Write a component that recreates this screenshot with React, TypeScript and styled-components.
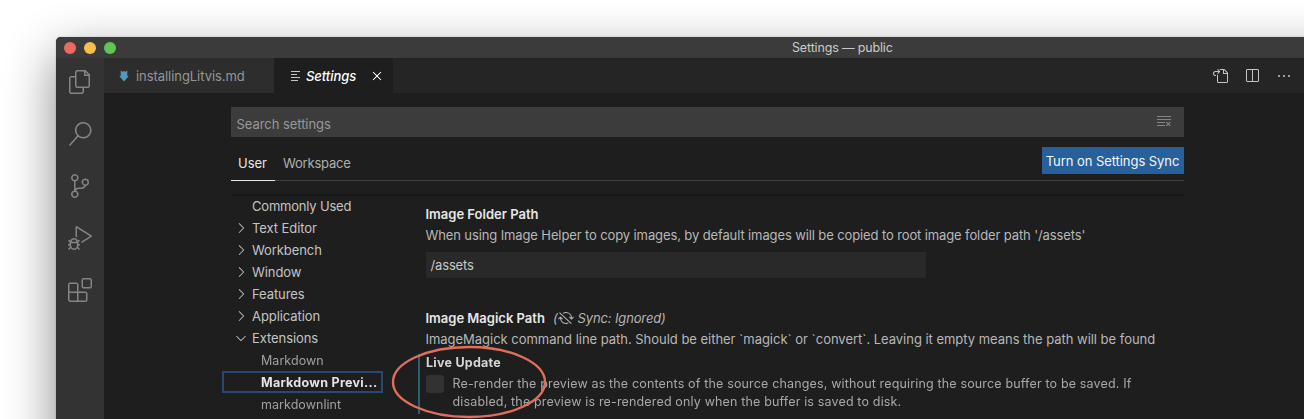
import React from "react";
import styled, { createGlobalStyle, css } from "styled-components";
import {
  VscFiles,
  VscSearch,
  VscSourceControl,
  VscDebugAlt,
  VscExtensions,
  VscGoToFile,
  VscSplitHorizontal,
  VscEllipsis,
  VscClearAll,
  VscSyncIgnored,
  VscChevronRight,
  VscChevronDown,
  VscClose,
} from "react-icons/vsc";

const GlobalStyle = createGlobalStyle`
  * { box-sizing: border-box; }
  html, body { margin: 0; background: #fff; overflow: hidden; }
  body { font-family: Inter, "Liberation Sans", sans-serif; font-size: 13px; color: #c4c4c4; }
  svg { display: block; flex: none; }
`;

const Page = styled.div`
  width: 1304px;
  height: 419px;
  padding: 37px 0 0 56px;
  overflow: hidden;
`;

const Window = styled.div`
  display: flex;
  flex-direction: column;
  width: 1400px;
  height: 700px;
  border-radius: 5px 0 0 0;
  background: #1e1e1e;
  box-shadow: 0 0 1px rgba(0, 0, 0, 0.5), 0 18px 50px rgba(0, 0, 0, 0.48);
`;

const TitleBar = styled.header`
  display: flex;
  align-items: center;
  height: 21px;
  padding-left: 8px;
  background: #3b3b3b;
  border-radius: 5px 0 0 0;
`;

const Light = styled.span<{ $color: string }>`
  width: 12px;
  height: 12px;
  margin-right: 8px;
  border-radius: 50%;
  background: ${(p) => p.$color};
`;

const Title = styled.span`
  margin: 0 0 1px 668px;
  letter-spacing: -0.15px;
  font-size: 12.5px;
  color: #cacaca;
`;

const Body = styled.div`
  display: flex;
  flex: 1;
`;

const ActivityBar = styled.nav`
  display: flex;
  flex-direction: column;
  align-items: center;
  gap: 28px;
  width: 48px;
  padding-top: 12px;
  background: #333333;
  color: #858585;
`;

const Editor = styled.main`
  display: flex;
  flex-direction: column;
  width: 1200px;
`;

const TabBar = styled.div`
  display: flex;
  height: 35px;
  background: #252526;
`;

const Tab = styled.div<{ $active?: boolean }>`
  display: flex;
  align-items: center;
  width: 170px;
  padding-left: 15px;
  background: #2d2d2d;
  color: #969696;
  ${(p) =>
    p.$active &&
    css`
      width: 119px;
      padding-left: 17px;
      background: #1e1e1e;
      color: #fff;
    `}
`;

const TabName = styled.span<{ $italic?: boolean }>`
  margin-left: ${(p) => (p.$italic ? 5 : 7)}px;
  padding-top: 1px;
  letter-spacing: -0.06px;
  font-style: ${(p) => (p.$italic ? "italic" : "normal")};
  font-weight: ${(p) => (p.$italic ? 500 : 400)};
  width: ${(p) => (p.$italic ? 63 : 120)}px;
  white-space: nowrap;
`;

const TabActions = styled.div`
  display: flex;
  align-items: center;
  gap: 16px;
  margin-left: 818.5px;
  color: #c5c5c5;
`;

const Settings = styled.section`
  width: 952.5px;
  margin: 14px 0 0 127px;
`;

const SearchBox = styled.div`
  display: flex;
  align-items: center;
  justify-content: space-between;
  height: 30px;
  padding: 3px 12px 0 5.5px;
  letter-spacing: -0.05px;
  background: #3c3c3c;
  color: #989898;
  svg { margin-bottom: 6px; color: #858585; }
`;

const ScopeRow = styled.div`
  display: flex;
  justify-content: space-between;
  height: 43.5px;
  border-bottom: 1px solid #404040;
`;

const Scopes = styled.div`
  display: flex;
`;

const Scope = styled.span<{ $active?: boolean }>`
  height: 43.5px;
  margin-right: 1px;
  padding: 0 7px;
  line-height: 53px;
  letter-spacing: ${(p) => (p.$active ? 0 : -0.2)}px;
  width: ${(p) => (p.$active ? "44px" : "auto")};
  color: ${(p) => (p.$active ? "#e7e7e7" : "#b0b0b0")};
  border-bottom: 1px solid ${(p) => (p.$active ? "#e7e7e7" : "transparent")};
`;

const SyncButton = styled.button`
  width: 142px;
  height: 27px;
  margin-top: 10px;
  padding: 0;
  border: 0;
  background: #28609c;
  color: #f2f6fa;
  font: inherit;
  letter-spacing: -0.06px;
`;

const Columns = styled.div`
  display: flex;
  height: 300px;
  margin-top: 13.5px;
  border-top: 2px solid #171717;
`;

const Toc = styled.ul`
  width: 195px;
  margin: -1px 0 0;
  padding: 0;
  list-style: none;
`;

const TocItem = styled.li<{ $spacing?: number }>`
  display: flex;
  align-items: center;
  gap: 3px;
  height: 22px;
  padding-left: 2px;
  letter-spacing: ${(p) => p.$spacing ?? -0.08}px;
`;

const ChevronSlot = styled.span`
  width: 16px;
`;

const TocChild = styled.li<{ $selected?: boolean }>`
  height: 22px;
  width: 161px;
  margin-left: -9px;
  padding-left: 37px;
  border: 2px solid transparent;
  line-height: 19px;
  font-size: 12.5px;
  letter-spacing: 0.05px;
  color: #a0a0a0;
  white-space: nowrap;
  > span { filter: blur(0.35px); }
  ${(p) =>
    p.$selected &&
    css`
      border-color: #264a72;
      font-weight: 700;
      letter-spacing: 0.29px;
      color: #e4e4e4;
    `}
`;

const SettingList = styled.div`
  width: 757px;
  padding-top: 7px;
  margin-left: -0.5px;
  white-space: nowrap;
`;

const SettingTitle = styled.div`
  display: flex;
  align-items: center;
  height: 21px;
  font-weight: 600;
  color: #e7e7e7;
`;

const SyncNote = styled.span`
  display: flex;
  align-items: center;
  margin-left: 8px;
  font-style: italic;
  font-weight: 400;
  letter-spacing: -0.13px;
  color: #b4b4b4;
  svg { margin-right: 4px; }
`;

const Description = styled.div<{ $spacing: number }>`
  height: 21px;
  line-height: 22px;
  letter-spacing: ${(p) => p.$spacing}px;
  color: #b8b8b8;
`;

const TextInput = styled.div`
  width: 500px;
  height: 26px;
  margin: 7px 0 29px;
  padding-left: 5px;
  line-height: 27px;
  letter-spacing: -0.15px;
  background: #292929;
  color: #c8c8c8;
`;

const Highlighted = styled.div`
  position: relative;
  margin-left: -7.5px;
  margin-top: 5px;
  height: 60px;
  padding-left: 6px;
  border-left: 2px solid #2b5e70;
  font-size: 12.5px;
  line-height: 18px;
`;

const HighlightTitle = styled.div`
  font-weight: 700;
  letter-spacing: 0.25px;
  color: #d6d6d6;
  filter: blur(0.35px);
`;

const CheckRow = styled.div`
  display: flex;
  gap: 8.5px;
  margin-top: 3px;
`;

const Checkbox = styled.span`
  width: 18px;
  height: 18px;
  border-radius: 3px;
  background: #323232;
`;

const CheckText = styled.div`
  letter-spacing: 0.155px;
  color: #a8a8a8;
  filter: blur(0.35px);
`;

const Ring = styled.svg`
  position: absolute;
  left: -29.5px;
  top: -9px;
`;

const sections = ["Text Editor", "Workbench", "Window", "Features", "Application"];

export default function App() {
  return (
    <Page>
      <GlobalStyle />
      <Window>
        <TitleBar>
          <Light $color="#ec6a5e" />
          <Light $color="#f4bf4f" />
          <Light $color="#61c454" />
          <Title>Settings — public</Title>
        </TitleBar>
        <Body>
          <ActivityBar>
            <VscFiles size={24} />
            <VscSearch size={24} />
            <VscSourceControl size={24} />
            <VscDebugAlt size={24} />
            <VscExtensions size={24} />
          </ActivityBar>
          <Editor>
            <TabBar>
              <Tab>
                <svg width="10" height="12" viewBox="0 0 10 12">
                  <path d="M1.7.5 3.6 1.8 5 .9 6.4 1.8 8.3.5V6h1.5L5 11.5.2 6h1.5z" fill="#519aba" />
                </svg>
                <TabName>installingLitvis.md</TabName>
              </Tab>
              <Tab $active>
                <svg width="10" height="10" viewBox="0 0 10 10" stroke="#c5c5c5">
                  <path d="M0 .5h9M0 3.5h6M0 6.5h9M0 9.5h7" />
                </svg>
                <TabName $italic>Settings</TabName>
                <VscClose size={16} />
              </Tab>
              <TabActions>
                <VscGoToFile size={16} />
                <VscSplitHorizontal size={16} />
                <VscEllipsis size={16} />
              </TabActions>
            </TabBar>
            <Settings>
              <SearchBox>
                Search settings
                <VscClearAll size={16} />
              </SearchBox>
              <ScopeRow>
                <Scopes>
                  <Scope $active>User</Scope>
                  <Scope>Workspace</Scope>
                </Scopes>
                <SyncButton>Turn on Settings Sync</SyncButton>
              </ScopeRow>
              <Columns>
                <Toc>
                  <TocItem $spacing={-0.2}>
                    <ChevronSlot />
                    Commonly Used
                  </TocItem>
                  {sections.map((name) => (
                    <TocItem key={name}>
                      <VscChevronRight size={16} />
                      {name}
                    </TocItem>
                  ))}
                  <TocItem>
                    <VscChevronDown size={16} />
                    Extensions
                  </TocItem>
                  <TocChild><span>Markdown</span></TocChild>
                  <TocChild $selected><span>Markdown Previ...</span></TocChild>
                  <TocChild><span>markdownlint</span></TocChild>
                </Toc>
                <SettingList>
                  <SettingTitle>Image Folder Path</SettingTitle>
                  <Description $spacing={-0.115}>
                    When using Image Helper to copy images, by default images will be copied to root image folder path '/assets'
                  </Description>
                  <TextInput>/assets</TextInput>
                  <SettingTitle>
                    Image Magick Path
                    <SyncNote>
                      (<VscSyncIgnored size={16} />Sync: Ignored)
                    </SyncNote>
                  </SettingTitle>
                  <Description $spacing={-0.027}>
                    ImageMagick command line path. Should be either `magick` or `convert`. Leaving it empty means the path will be found
                  </Description>
                  <Highlighted>
                    <HighlightTitle>Live Update</HighlightTitle>
                    <CheckRow>
                      <Checkbox />
                      <CheckText>
                        Re-render the preview as the contents of the source changes, without requiring the source buffer to be saved. If
                        <br />
                        disabled, the preview is re-rendered only when the buffer is saved to disk.
                      </CheckText>
                    </CheckRow>
                    <Ring width="156" height="74" viewBox="0 0 156 74">
                      <ellipse cx="78" cy="37" rx="76" ry="35" fill="none" stroke="#df6f5d" strokeWidth="2.4" />
                    </Ring>
                  </Highlighted>
                </SettingList>
              </Columns>
            </Settings>
          </Editor>
        </Body>
      </Window>
    </Page>
  );
}
